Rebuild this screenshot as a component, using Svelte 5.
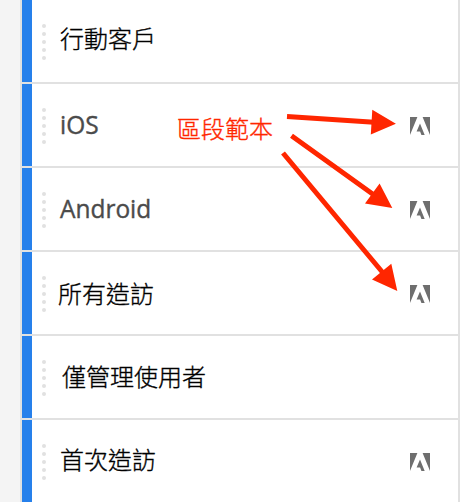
<script>
  const rows = [
    { label: '行動客戶', x: 28, y: -3, badge: false },
    { label: 'iOS', x: 28, y: -1, badge: true, latin: true },
    { label: 'Android', x: 28, y: -1, badge: true, latin: true },
    { label: '所有造訪', x: 26, y: 0, badge: true },
    { label: '僅管理使用者', x: 30, y: -1, badge: false },
    { label: '首次造訪', x: 28, y: -2, badge: true },
  ];
</script>

<div class="panel">
  <div class="gutter"></div>
  <div class="list">
    {#each rows as row}
      <div class="row">
        <div class="stripe"></div>
        <div class="handle">
          {#each [0, 1, 2, 3, 4] as dot (dot)}<i></i>{/each}
        </div>
        <span class="label" class:latin={row.latin} style="margin-left: {row.x - 14}px; margin-top: {row.y * 2}px">{row.label}</span>
        {#if row.badge}
          <svg class="logo" width="20" height="18" viewBox="0 0 20 18">
            <path d="M0 0H7.4L0 18ZM12.6 0H20V18ZM10 6.6L14.7 18H11.4L10.1 14.5H6.6Z" />
          </svg>
        {/if}
      </div>
    {/each}
  </div>
  <span class="note">區段範本</span>
  <svg class="arrows" width="460" height="502" viewBox="0 0 460 502">
    <g stroke-width="5">
      <path d="M287 116.6L374 122.2M291.5 135.8L374 195M283 153L383.5 273.5" />
    </g>
    <path class="head" d="M372.3 109.7L395.9 123.8L370.8 134.6ZM379.6 183.4L392.3 208L365 203.6ZM391.3 263.8L397.3 291L372 279.6Z" />
  </svg>
</div>

<style>
  .panel {
    position: relative;
    display: flex;
    width: 460px;
    height: 502px;
    overflow: hidden;
    background: #fff;
    font-family: "Noto Sans CJK TC", sans-serif;
  }
  .gutter {
    width: 20px;
    background: #f4f4f4;
  }
  .list {
    box-sizing: border-box;
    width: 440px;
    border-left: 2px solid #e1e1e1;
    border-right: 2px solid #e1e1e1;
  }
  .row {
    box-sizing: border-box;
    display: flex;
    align-items: center;
    height: 84px;
    border-bottom: 2px solid #e1e1e1;
  }
  .stripe {
    align-self: stretch;
    width: 10px;
    background: #2680eb;
  }
  .handle {
    display: flex;
    flex-direction: column;
    gap: 4px;
    margin: 2px 0 0 10px;
  }
  .handle i {
    width: 4px;
    height: 4px;
    border-radius: 50%;
    background: #e1e1e1;
  }
  .label {
    font-size: 24px;
    font-weight: 300;
    line-height: 36px;
    white-space: nowrap;
    color: #000;
    -webkit-text-stroke: 0.35px #000;
  }
  .latin {
    font-family: "Open Sans", sans-serif;
    font-size: 26px;
    font-weight: 400;
    color: #4b4b4b;
    -webkit-text-stroke: 0.4px #4b4b4b;
    transform: scaleX(0.94);
    transform-origin: left;
  }
  .logo {
    margin: 2px 28px 0 auto;
    fill: #6e6e6e;
  }
  .note {
    position: absolute;
    left: 177px;
    top: 110px;
    font-size: 24px;
    font-weight: 300;
    line-height: 36px;
    color: #ff2600;
    -webkit-text-stroke: 0.35px #ff2600;
  }
  .arrows {
    position: absolute;
    inset: 0;
    fill: none;
    stroke: #ff2600;
  }
  .head {
    fill: #ff2600;
    stroke: none;
  }
</style>
